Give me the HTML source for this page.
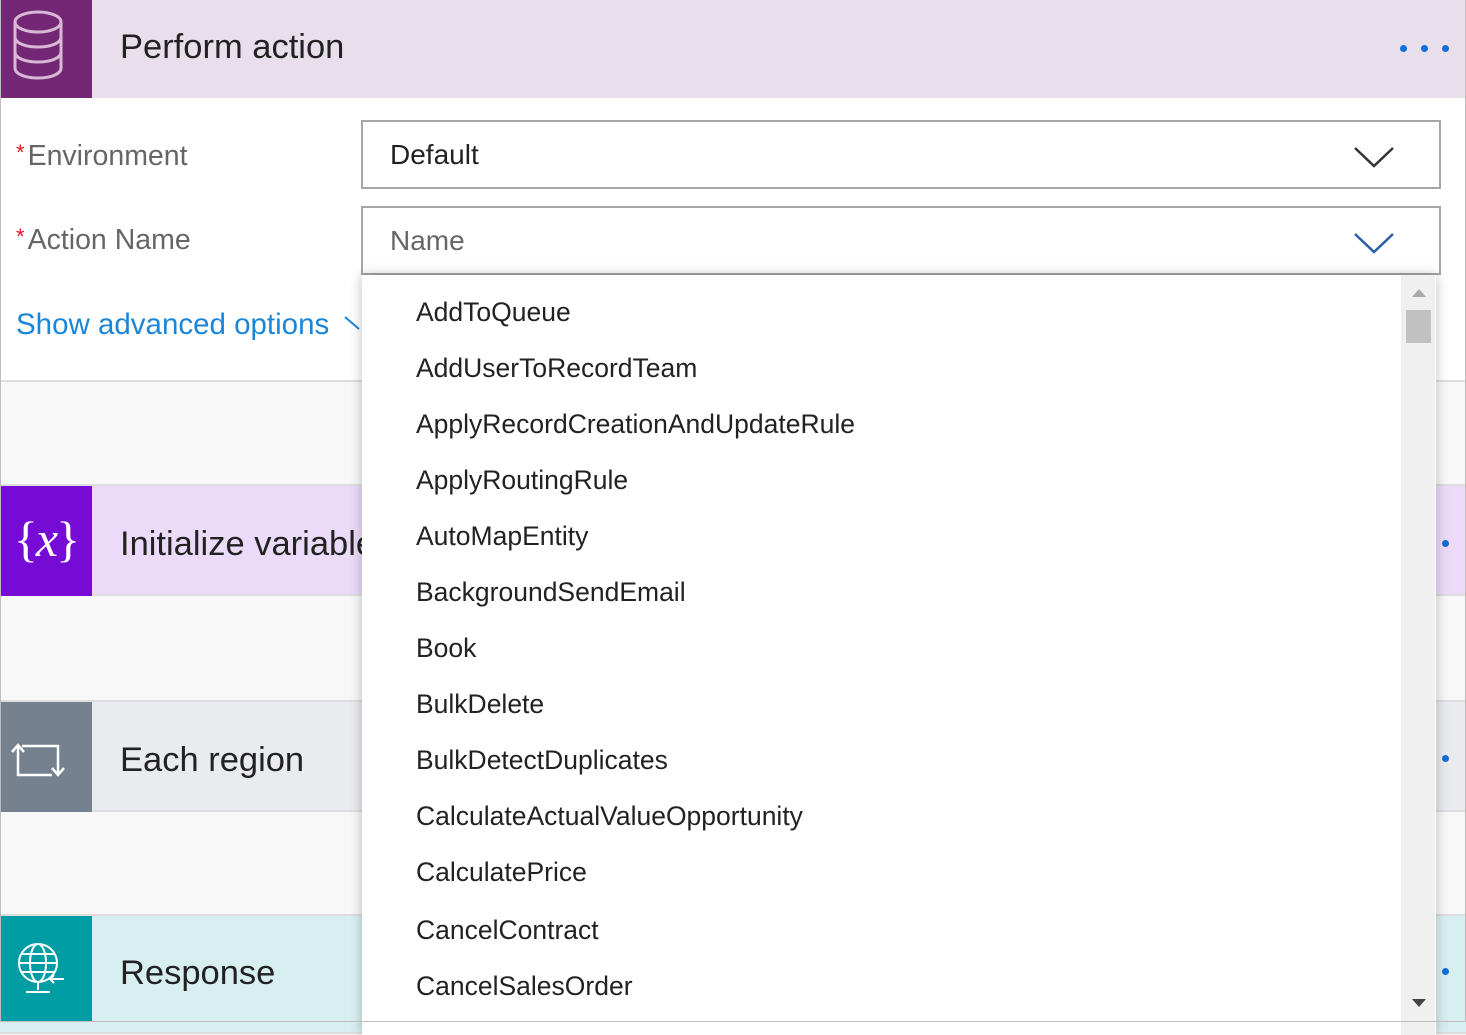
<!DOCTYPE html>
<html><head><meta charset="utf-8"><style>
*{margin:0;padding:0;box-sizing:border-box}
body{width:1466px;height:1022px;overflow:hidden;background:#f8f8f8;font-family:"Liberation Sans",sans-serif;position:relative}
.frame{position:absolute;left:0;top:0;width:1466px;height:1022px;border:1px solid #bdbdbd;border-top:none;pointer-events:none;z-index:20}
.abs{position:absolute}
.hdr{left:0;top:0;width:1466px;height:98px;background:#e9dfec}
.ico{left:0;width:92px}
.title{font-size:34.5px;color:#222}
.body{left:0;top:98px;width:1466px;height:284px;background:#fff;border-bottom:2px solid #ddd}
.lbl{font-size:28.5px;color:#666}
.lbl b{color:#e81123;font-weight:normal;font-size:22px;vertical-align:top;margin-right:3px}
.box{left:361px;width:1080px;height:69px;border:2px solid #a6a6a6;background:#fff;font-size:28px;padding-left:27px;line-height:65px}
.card{left:0;width:1466px;height:112px;border-top:2px solid #ddd;border-bottom:2px solid #ddd}
.dot{width:7px;height:7px;border-radius:50%;background:#0f6fd8}
.dd{left:362px;top:275px;width:1074px;height:760px;background:#fff;box-shadow:0 0 12px rgba(0,0,0,.25);z-index:10}
.it{position:absolute;left:54px;font-size:26.5px;color:#222;line-height:30px}
.sb{position:absolute;right:1px;top:0;width:34px;height:760px;background:#f0f0f0}
</style></head><body>
<div class="abs hdr"></div>
<div class="abs ico" style="top:0;height:98px;background:#742774">
<svg width="92" height="98" viewBox="0 0 92 98"><g fill="none" stroke="#d9b8d6" stroke-width="3"><ellipse cx="38" cy="22" rx="23" ry="10"/><path d="M15 22v46c0 6 10 10 23 10s23-4 23-10V22M15 37c0 6 10 10 23 10s23-4 23-10M15 52c0 6 10 10 23 10s23-4 23-10"/></g></svg></div>
<div class="abs title" style="left:120px;top:28px">Perform action</div>
<div class="abs dot" style="left:1400px;top:45px"></div><div class="abs dot" style="left:1421px;top:45px"></div><div class="abs dot" style="left:1442px;top:45px"></div>
<div class="abs body"></div>
<div class="abs lbl" style="left:16px;top:140px"><b>*</b>Environment</div>
<div class="abs lbl" style="left:16px;top:224px"><b>*</b>Action Name</div>
<div class="abs" style="left:16px;top:308px;font-size:29.5px;color:#1a86d9">Show advanced options</div>
<svg class="abs" style="left:344px;top:316px" width="20" height="16"><path d="M1 1l14 12" fill="none" stroke="#1a86d9" stroke-width="2"/></svg>
<div class="abs box" style="top:120px;color:#222">Default
<svg class="abs" style="right:44px;top:24px" width="42" height="22"><path d="M2 2l19 18 19-18" fill="none" stroke="#333" stroke-width="2.5"/></svg></div>
<div class="abs box" style="top:206px;color:#666">Name
<svg class="abs" style="right:44px;top:24px" width="42" height="22"><path d="M2 2l19 18 19-18" fill="none" stroke="#2a5ea8" stroke-width="2.5"/></svg></div>

<div class="abs card" style="top:484px;background:#ebdbf9"></div>
<div class="abs ico" style="top:486px;height:110px;background:#770bd6;color:#fff;font-family:'Liberation Serif',serif;font-size:50px;line-height:106px;text-align:center;letter-spacing:-2px">{<i>x</i>}</div>
<div class="abs title" style="left:120px;top:525px">Initialize variable</div>
<div class="abs dot" style="left:1442px;top:540px"></div>

<div class="abs card" style="top:700px;background:#eaebef"></div>
<div class="abs ico" style="top:702px;height:110px;background:#768190">
<svg width="92" height="110"><g fill="none" stroke="#fff" stroke-width="2.5"><path d="M18 44v29h34"/><path d="M12 50l6-7 6 7"/><path d="M22 44h36v28"/><path d="M52 66l6 7 6-7"/></g></svg></div>
<div class="abs title" style="left:120px;top:741px">Each region</div>
<div class="abs dot" style="left:1442px;top:755px"></div>

<div class="abs card" style="top:914px;background:#d8eff1;height:120px"></div>
<div class="abs ico" style="top:916px;height:106px;background:#009da5">
<svg width="92" height="106"><g fill="none" stroke="#fff" stroke-width="2"><circle cx="38" cy="47" r="19"/><ellipse cx="38" cy="47" rx="8" ry="19"/><path d="M19 47h38M22 38h32M22 56h32M38 66v8M26 76h24M50 63h14M54 59l-4 4 4 4"/></g></svg></div>
<div class="abs title" style="left:120px;top:954px">Response</div>
<div class="abs dot" style="left:1442px;top:968px"></div>

<div class="abs dd">
<div class="it" style="top:22px">AddToQueue</div>
<div class="it" style="top:78px">AddUserToRecordTeam</div>
<div class="it" style="top:134px">ApplyRecordCreationAndUpdateRule</div>
<div class="it" style="top:190px">ApplyRoutingRule</div>
<div class="it" style="top:246px">AutoMapEntity</div>
<div class="it" style="top:302px">BackgroundSendEmail</div>
<div class="it" style="top:358px">Book</div>
<div class="it" style="top:414px">BulkDelete</div>
<div class="it" style="top:470px">BulkDetectDuplicates</div>
<div class="it" style="top:526px">CalculateActualValueOpportunity</div>
<div class="it" style="top:582px">CalculatePrice</div>
<div class="it" style="top:640px">CancelContract</div>
<div class="it" style="top:696px">CancelSalesOrder</div>
<div class="sb">
<div class="abs" style="left:11px;top:14px;width:0;height:0;border-left:7px solid transparent;border-right:7px solid transparent;border-bottom:8px solid #aaa"></div>
<div class="abs" style="left:5px;top:35px;width:25px;height:33px;background:#c1c1c1"></div>
<div class="abs" style="left:11px;top:724px;width:0;height:0;border-left:7px solid transparent;border-right:7px solid transparent;border-top:8px solid #444"></div>
</div>
</div>
<div class="frame"></div>
</body></html>
